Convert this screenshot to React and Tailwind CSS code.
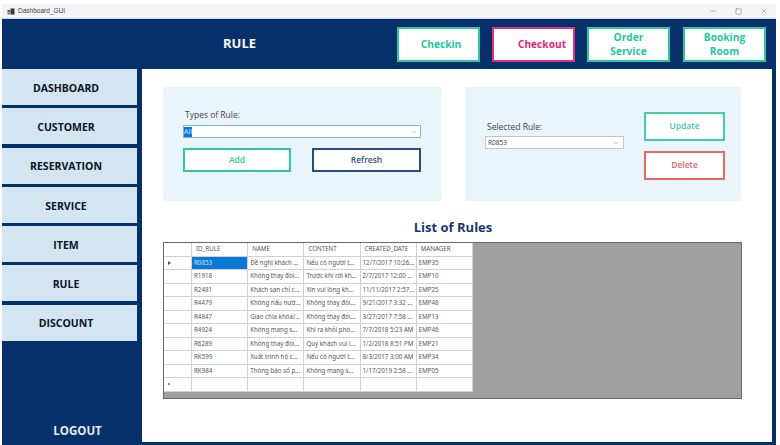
import { ChevronDown, Minus, Square, X } from "lucide-react";

const menu = ["DASHBOARD", "CUSTOMER", "RESERVATION", "SERVICE", "ITEM", "RULE", "DISCOUNT"];

const rules = [
  ["R0853", "Đề nghị khách ...", "Nếu có người t...", "12/7/2017 10:26...", "EMP35"],
  ["R1918", "Không thay đổi...", "Trước khi rời kh...", "2/7/2017 12:00 ...", "EMP10"],
  ["R2481", "Khách sạn chỉ c...", "Xin vui lòng kh...", "11/11/2017 2:57...", "EMP25"],
  ["R4479", "Không nấu nướ...", "Không thay đổi...", "9/21/2017 3:32 ...", "EMP48"],
  ["R4847", "Giao chìa khóa/...", "Không thay đổi...", "3/27/2017 7:58 ...", "EMP13"],
  ["R4924", "Không mang s...", "Khi ra khỏi phò...", "7/7/2018 5:23 AM", "EMP46"],
  ["R6289", "Không thay đổi...", "Quý khách vui l...", "1/2/2018 8:51 PM", "EMP21"],
  ["RK599", "Xuất trình hộ c...", "Nếu có người t...", "8/3/2017 3:00 AM", "EMP34"],
  ["RK984", "Thông báo số p...", "Không mang s...", "1/17/2019 2:58 ...", "EMP05"],
  ["", "", "", "", ""],
];

const headers = ["ID_RULE", "NAME", "CONTENT", "CREATED_DATE", "MANAGER"];

function Cell({ children, selected }) {
  return (
    <div className={`w-[56.2px] shrink-0 border-r border-b border-[#d0d0d0] pl-[2px] font-['Noto_Sans',sans-serif] text-[6.2px] leading-[12.5px] whitespace-nowrap ${selected ? "bg-[#0a78d7] text-[#cfe6fa]" : "bg-white text-[#555]"}`}>
      {children || "\u00a0"}
    </div>
  );
}

function RuleGrid() {
  return (
    <div className="flex h-[157px] border border-[#696969] bg-[#a0a0a0]">
      <div className="flex h-[148px] flex-col">
        <div className="flex h-[13.5px]">
          <div className="w-[28px] shrink-0 border-r border-b border-[#d0d0d0] bg-white" />
          {headers.map(h => (
            <div key={h} className="w-[56.2px] shrink-0 border-r border-b border-[#d0d0d0] bg-white pl-[4px] font-['Noto_Sans',sans-serif] text-[6.2px] leading-[12.5px] text-[#555]">{h}</div>
          ))}
        </div>
        {rules.map((row, i) => (
          <div key={i} className="flex h-[13.5px]">
            <div className="flex w-[28px] shrink-0 items-center border-r border-b border-[#d0d0d0] bg-white pl-[4px]">
              {i === 0 && <div className="h-0 w-0 border-y-[2.5px] border-l-[3px] border-y-transparent border-l-[#555]" />}
              {i === 9 && <div className="h-[2px] w-[2px] rounded-full bg-[#666]" />}
            </div>
            {row.map((c, j) => (
              <Cell key={j} selected={i === 0 && j === 0}>{c}</Cell>
            ))}
          </div>
        ))}
      </div>
    </div>
  );
}

function ActionButton({ className, children }) {
  return (
    <button className={`flex items-center justify-center border-2 bg-white text-[8.5px] font-semibold ${className}`}>
      {children}
    </button>
  );
}

function TopButton({ className, children }) {
  return (
    <button className={`flex h-[35px] w-[83px] items-center justify-center border-2 bg-white text-[10.2px] leading-[14px] font-bold ${className}`}>
      {children}
    </button>
  );
}

export default function App() {
  return (
    <div className="flex h-[445px] w-[780px] flex-col bg-white pt-[4px] pr-[4px] pl-[2px] font-['Open_Sans','Noto_Sans',sans-serif]">
      <div className="flex h-[15px] shrink-0 items-center justify-between border-b border-[#cfd2e8] bg-[#f3f3f8] pr-[8px]">
        <div className="flex items-center gap-[3px] pl-[5px]">
          <svg width="8" height="7" viewBox="0 0 8 7">
            <rect x="0.5" y="2" width="2.5" height="2" fill="#555" />
            <rect x="0.5" y="4.5" width="2.5" height="2" fill="#777" />
            <rect x="3.5" y="0.5" width="4" height="6" fill="#333" />
          </svg>
          <span className="font-['Liberation_Sans',sans-serif] text-[6.5px] text-[#444]">Dashboard_GUI</span>
        </div>
        <div className="flex items-center gap-[18px] text-[#555]">
          <Minus size={8} strokeWidth={1.2} />
          <Square size={7} strokeWidth={1.4} />
          <X size={8} strokeWidth={1.2} />
        </div>
      </div>

      <div className="flex min-h-0 flex-1 flex-col bg-[#06306a] pb-[3px]">
        <div className="flex h-[50px] shrink-0 items-center">
          <h1 className="w-[395px] shrink-0 pl-[80px] text-center text-[13px] font-bold text-white">RULE</h1>
          <div className="flex items-center gap-[12px]">
            <TopButton className="border-[#2cc9a0] pl-[5px] text-[#22c79b]">Checkin</TopButton>
            <TopButton className="border-[#e0307f] pl-[17px] text-[#e3267b]">Checkout</TopButton>
            <TopButton className="border-[#2cc9a0] text-[#22c79b]">Order<br />Service</TopButton>
            <TopButton className="ml-[1px] border-[#2cc9a0] text-[#22c79b]">Booking<br />Room</TopButton>
          </div>
        </div>

        <div className="flex min-h-0 flex-1">
          <nav className="flex w-[140px] shrink-0 flex-col pr-[5px]">
            <div className="flex flex-col gap-[3.3px]">
              {menu.map(m => (
                <button key={m} className="h-[36px] bg-[#d3e5f1] pt-[3px] pr-[7px] text-center text-[10.5px] font-bold text-[#0b1524]">{m}</button>
              ))}
            </div>
            <div className="mt-auto pb-[3px] pl-[16px] text-center text-[11.5px] font-bold text-[#e6ebf3]">LOGOUT</div>
          </nav>

          <main className="mr-[4px] flex-1 bg-white pt-[18px] pl-[21px]">
            <div className="flex gap-[24px]">
              <section className="h-[114px] w-[278px] bg-[#e9f4fb] pt-[22px] pl-[20px]">
                <label className="block pl-[2px] text-[8.5px] leading-[12px] text-[#444]">Types of Rule:</label>
                <div className="mt-[4px] flex h-[13px] w-[238px] items-center justify-between border border-[#7eb4da] bg-white pr-[2px]">
                  <span className="bg-[#0a78d7] text-[7px] leading-[10px] text-[#cfe6fa]">All</span>
                  <ChevronDown size={8} strokeWidth={1.2} className="text-[#777]" />
                </div>
                <div className="mt-[10px] flex gap-[21px]">
                  <ActionButton className="h-[24px] w-[108px] border-[#2cc9a0] text-[#2cc9a0]">Add</ActionButton>
                  <ActionButton className="h-[24px] w-[109px] border-[#2a4a80] text-[#34507f]">Refresh</ActionButton>
                </div>
              </section>

              <section className="flex h-[114px] w-[276px] items-start bg-[#e9f4fb] pt-[25px] pl-[20px]">
                <div className="pt-[9px]">
                  <label className="block pl-[2px] text-[8.5px] leading-[12px] text-[#444]">Selected Rule:</label>
                  <div className="mt-[3px] flex h-[13px] w-[139px] items-center justify-between border border-[#c4c4c4] bg-white pr-[3px] pl-[2px]">
                    <span className="text-[6.5px] text-[#333]">R0853</span>
                    <ChevronDown size={8} strokeWidth={1.2} className="text-[#777]" />
                  </div>
                </div>
                <div className="ml-[20px] flex flex-col gap-[10px]">
                  <ActionButton className="h-[29px] w-[81px] border-[#3dcfa6] text-[#48c9a6]">Update</ActionButton>
                  <ActionButton className="h-[29px] w-[81px] border-[#e8695f] text-[#e85f5f]">Delete</ActionButton>
                </div>
              </section>
            </div>

            <h2 className="mt-[16px] w-[580px] text-center text-[13px] leading-[20px] font-bold text-[#16366b]">List of Rules</h2>
            <div className="mt-[5px] w-[579px]">
              <RuleGrid />
            </div>
          </main>
        </div>
      </div>
    </div>
  );
}
